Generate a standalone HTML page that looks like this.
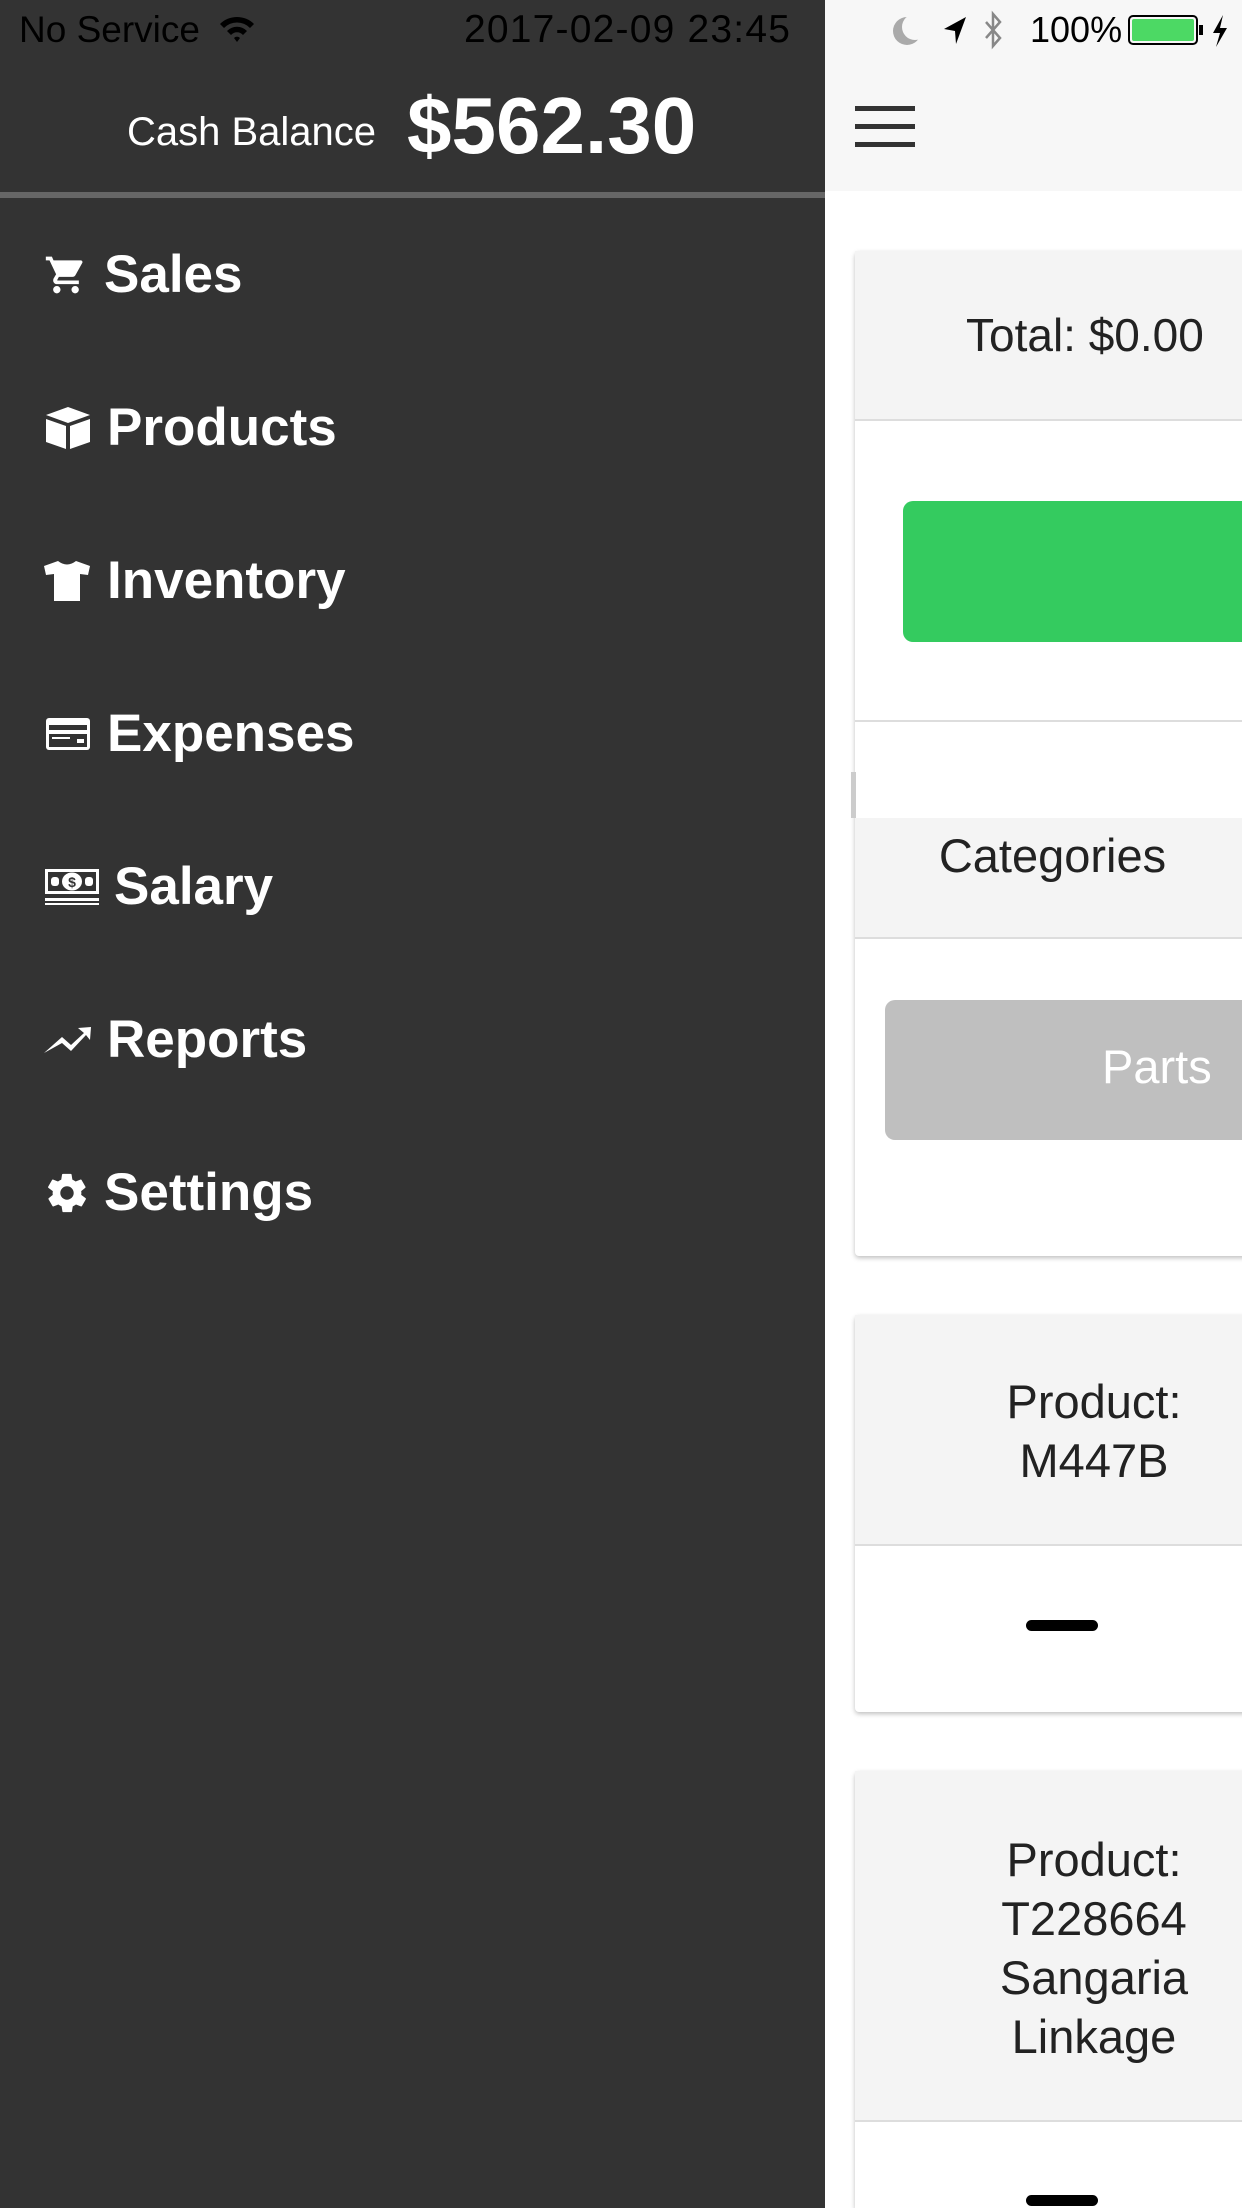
<!DOCTYPE html>
<html style="overflow:hidden;width:1242px;height:2208px"><head><meta charset="utf-8"><style>
*{margin:0;padding:0;box-sizing:border-box}
body{width:1242px;height:2208px;overflow:hidden;position:relative;background:#fff;font-family:"Liberation Sans",sans-serif}
.abs{position:absolute}
#drawer{left:0;top:0;width:825px;height:2208px;background:#333}
.item{position:absolute;left:0;height:60px;width:800px;color:#fff;font-weight:bold;font-size:53px;line-height:60px;display:flex;align-items:center}
.item svg{position:absolute;left:44px}
.item span{position:absolute;left:104px;top:0;white-space:nowrap}
.card{position:absolute;left:855px;width:420px;background:#fff;box-shadow:0 2px 5px rgba(0,0,0,.25);border-radius:4px}
.gray{background:#f4f4f4}
.t{color:#222;font-size:47px;text-align:center;position:absolute;line-height:59px}
</style></head><body>
<div class="abs" style="left:825px;top:0;width:417px;height:191px;background:#f7f7f7"></div>
<div id="drawer" class="abs"></div>
<div class="abs" style="left:19px;top:9px;font-size:37px;color:#000">No Service</div>
<svg class="abs" style="left:218px;top:14px" width="38" height="30" viewBox="0 0 38 30"><path d="M2 10 A24 24 0 0 1 36 10 L32 14 A18 18 0 0 0 6 14Z M9 17 A14 14 0 0 1 29 17 L25 21 A8 8 0 0 0 13 21Z M16 24 L19 28 L22 24 A4 4 0 0 0 16 24Z" fill="#000"/></svg>
<div class="abs" style="left:464px;top:8px;font-size:39px;letter-spacing:1.2px;color:#000">2017-02-09 23:45</div>
<svg class="abs" style="left:890px;top:12px" width="34" height="38"><circle cx="17" cy="19" r="14" fill="#aaa"/><circle cx="25" cy="15" r="13" fill="#f7f7f7"/></svg>
<svg class="abs" style="left:940px;top:14px" width="30" height="34"><path d="M26 3 L4 15 L15 17 L16 30Z" fill="#000"/></svg>
<svg class="abs" style="left:982px;top:10px" width="24" height="42"><path d="M4 12 L18 28 L11 36 L11 4 L18 12 L4 28" stroke="#888" stroke-width="2.5" fill="none"/></svg>
<div class="abs" style="left:1030px;top:9px;font-size:36px;color:#000">100%</div>
<div class="abs" style="left:1128px;top:15px;width:70px;height:30px;border:2px solid #000;border-radius:5px;padding:2px"><div style="background:#4cd964;width:100%;height:100%;border-radius:2px"></div></div>
<div class="abs" style="left:1199px;top:25px;width:4px;height:10px;background:#000"></div>
<svg class="abs" style="left:1210px;top:14px" width="20" height="34"><path d="M13 1 L3 19 L10 19 L6 33 L17 14 L10 14Z" fill="#000"/></svg>
<div class="abs" style="left:127px;top:110px;font-size:40px;color:#fff">Cash Balance</div>
<div class="abs" style="left:407px;top:80px;font-size:80px;font-weight:bold;color:#fff">$562.30</div>
<div class="abs" style="left:0;top:192px;width:825px;height:6px;background:#666"></div>
<div class="item" style="top:245px"><svg width="44" height="44" viewBox="0 0 24 24"><path fill="#fff" d="M7 18c-1.1 0-2 .9-2 2s.9 2 2 2 2-.9 2-2-.9-2-2-2zM1 2v2h2l3.6 7.6L5.2 14c-.1.3-.2.6-.2 1 0 1.1.9 2 2 2h12v-2H7.4c-.1 0-.2-.1-.2-.2v-.1l.9-1.7h7.4c.8 0 1.4-.4 1.7-1l3.6-6.5c.1-.2.2-.3.2-.5 0-.6-.4-1-1-1H5.2l-.9-2H1zm16 16c-1.1 0-2 .9-2 2s.9 2 2 2 2-.9 2-2-.9-2-2-2z"/></svg><span>Sales</span></div>
<div class="item" style="top:398px"><svg width="48" height="46" viewBox="0 0 48 46"><path fill="#fff" d="M24 2 L46 10 L24 18 L2 10Z M2 14 L22 21 L22 44 L2 37Z M26 21 L46 14 L46 37 L26 44Z"/></svg><span style="left:107px">Products</span></div>
<div class="item" style="top:551px"><svg width="46" height="44" viewBox="0 0 46 44"><path fill="#fff" d="M14 2 Q23 9 32 2 L46 7 L44 16 L36 15 L36 42 L10 42 L10 15 L2 16 L0 7Z"/></svg><span style="left:107px">Inventory</span></div>
<div class="item" style="top:704px"><svg width="48" height="36" viewBox="0 0 48 36"><rect x="2" y="2" width="44" height="32" rx="3" fill="#fff"/><rect x="5" y="9" width="38" height="5" fill="#333"/><rect x="5" y="18" width="38" height="13" fill="#333"/><rect x="8" y="21" width="18" height="2" fill="#fff"/><rect x="33" y="23" width="7" height="4" fill="#fff"/></svg><span style="left:107px">Expenses</span></div>
<div class="item" style="top:857px"><svg width="56" height="40" viewBox="0 0 56 40"><rect x="1" y="2" width="54" height="25" fill="#fff"/><rect x="4" y="5" width="48" height="19" fill="#333"/><ellipse cx="28" cy="14.5" rx="10" ry="9" fill="#fff"/><text x="28" y="20" font-size="14" font-weight="bold" text-anchor="middle" fill="#333" font-family="Liberation Sans">$</text><rect x="7" y="10" width="8" height="9" rx="3" fill="#fff"/><rect x="41" y="10" width="8" height="9" rx="3" fill="#fff"/><rect x="1" y="31" width="54" height="3" fill="#fff"/><rect x="1" y="36" width="54" height="2" fill="#fff"/></svg><span style="left:114px">Salary</span></div>
<div class="item" style="top:1010px"><svg width="48" height="30" viewBox="0 0 48 30"><path fill="#fff" d="M0 28 L18 12 L27 20 L40 8 L34 3 L47 2 L46 15 L42 10 L27 26 L18 18 Z"/></svg><span style="left:107px">Reports</span></div>
<div class="item" style="top:1163px"><svg width="46" height="46" viewBox="0 0 24 24"><path fill="#fff" d="M19.4 13c.04-.3.1-.7.1-1s-.03-.7-.1-1l2.1-1.7c.2-.15.25-.4.1-.6l-2-3.5c-.1-.2-.4-.3-.6-.2l-2.5 1c-.5-.4-1.1-.7-1.7-1l-.4-2.6c0-.2-.2-.4-.5-.4h-4c-.25 0-.46.2-.5.4l-.4 2.6c-.6.3-1.2.6-1.7 1l-2.5-1c-.2-.1-.5 0-.6.2l-2 3.5c-.1.2-.1.5.1.6L4.6 11c0 .3-.1.7-.1 1s0 .7.1 1l-2.1 1.7c-.2.1-.25.4-.1.6l2 3.5c.1.2.4.3.6.2l2.5-1c.5.4 1.1.7 1.7 1l.4 2.6c0 .2.2.4.5.4h4c.25 0 .46-.2.5-.4l.4-2.6c.6-.3 1.2-.6 1.7-1l2.5 1c.2.1.5 0 .6-.2l2-3.5c.1-.2.1-.5-.1-.6L19.4 13zM12 15.5c-1.9 0-3.5-1.6-3.5-3.5s1.6-3.5 3.5-3.5 3.5 1.6 3.5 3.5-1.6 3.5-3.5 3.5z"/></svg><span>Settings</span></div>

<div class="abs" style="left:855px;top:106px;width:60px;height:5px;background:#333"></div>
<div class="abs" style="left:855px;top:124px;width:60px;height:5px;background:#333"></div>
<div class="abs" style="left:855px;top:142px;width:60px;height:5px;background:#333"></div>

<div class="card" style="top:251px;height:1005px">
 <div class="gray abs" style="left:0;top:0;width:420px;height:170px;border-bottom:2px solid #ddd"></div>
 <div class="t" style="left:111px;top:55px;text-align:left;white-space:nowrap;font-size:46px">Total: $0.00</div>
 <div class="abs" style="left:48px;top:250px;width:400px;height:141px;background:#34cb5f;border-radius:10px"></div>
 <div class="abs" style="left:0;top:469px;width:420px;height:2px;background:#ddd"></div>
 <div class="gray abs" style="left:0;top:567px;width:420px;height:121px;border-bottom:2px solid #ddd"></div>
 <div class="t" style="left:0;top:575px;width:395px;font-size:47px">Categories</div>
 <div class="abs" style="left:30px;top:749px;width:400px;height:140px;background:#bfbfbf;border-radius:10px"></div>
 <div class="abs" style="left:247px;top:788px;font-size:47px;color:#fff">Parts</div>
</div>
<div class="abs" style="left:851px;top:772px;width:5px;height:46px;background:#ccc"></div>

<div class="card" style="top:1315px;height:397px">
 <div class="gray abs" style="left:0;top:0;width:420px;height:231px;border-bottom:2px solid #ddd"></div>
 <div class="t" style="left:0;top:57px;width:478px">Product:<br>M447B</div>
 <div class="abs" style="left:171px;top:305px;width:72px;height:11px;background:#000;border-radius:6px"></div>
</div>

<div class="card" style="top:1771px;height:437px;border-radius:4px 4px 0 0">
 <div class="gray abs" style="left:0;top:0;width:420px;height:351px;border-bottom:2px solid #ddd"></div>
 <div class="t" style="left:0;top:59px;width:478px">Product:<br>T228664<br>Sangaria<br>Linkage</div>
 <div class="abs" style="left:171px;top:424px;width:72px;height:11px;background:#000;border-radius:6px"></div>
</div>
</body></html>
